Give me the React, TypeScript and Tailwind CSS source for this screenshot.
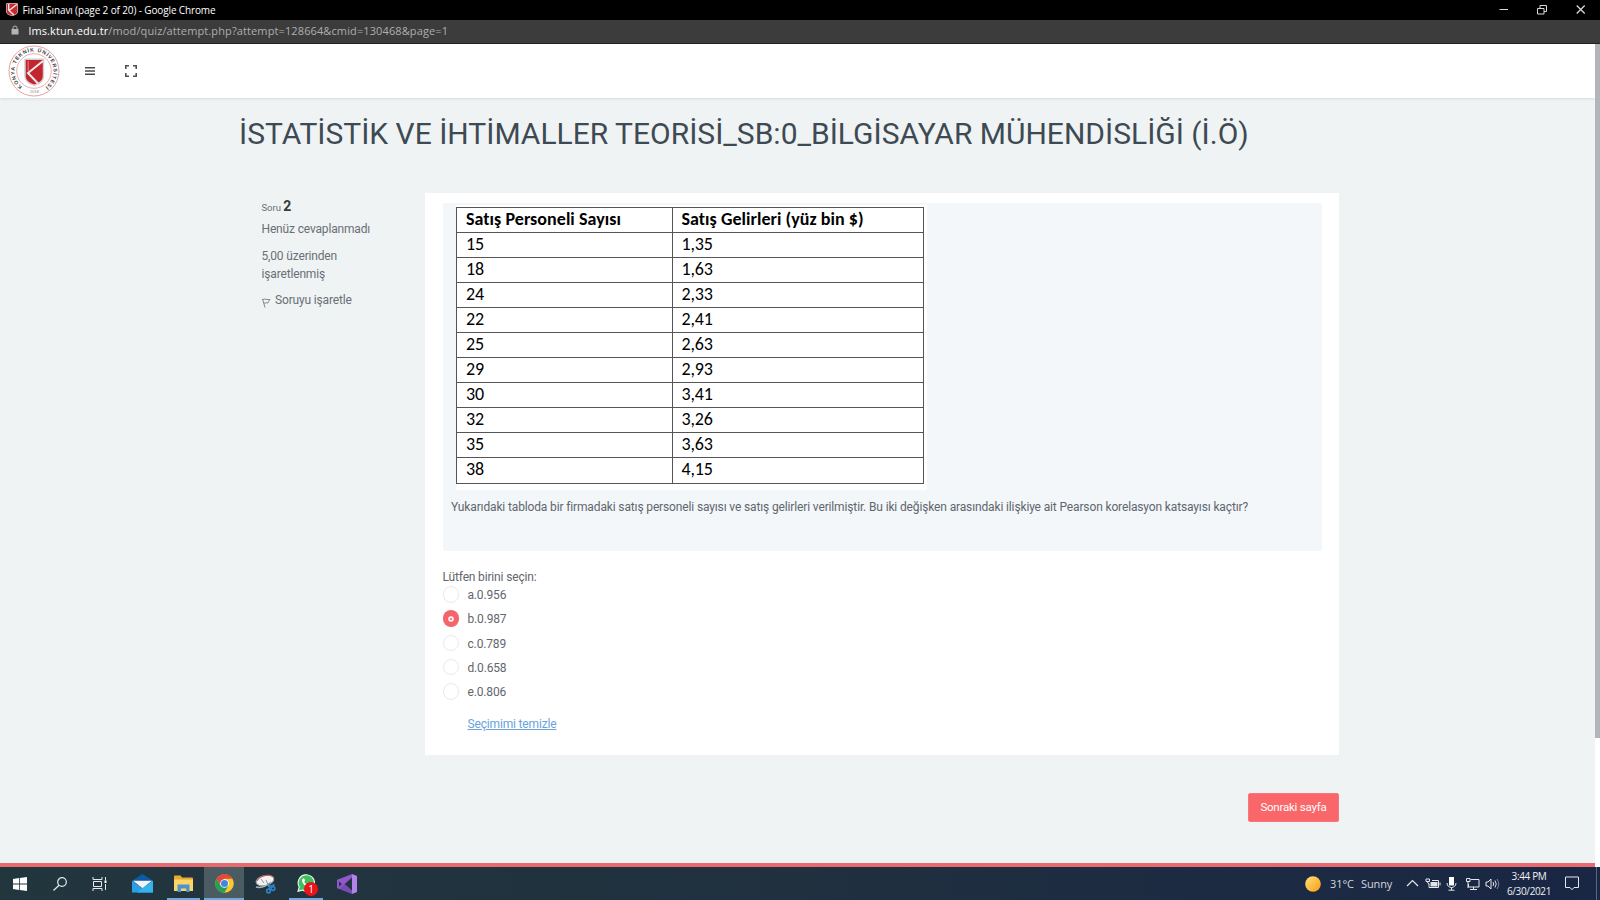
import React from "react";

const ROWS: [string, string][] = [
  ["15", "1,35"],
  ["18", "1,63"],
  ["24", "2,33"],
  ["22", "2,41"],
  ["25", "2,63"],
  ["29", "2,93"],
  ["30", "3,41"],
  ["32", "3,26"],
  ["35", "3,63"],
  ["38", "4,15"],
];

const OPTIONS = ["a.0.956", "b.0.987", "c.0.789", "d.0.658", "e.0.806"];

function Shield({ className }: { className: string }) {
  return (
    <svg className={className} viewBox="0 0 12 13">
      <path d="M0.500 0.500h11v8.500c0 2-2.500 3-5.500 3.700c-3-.7-5.500-1.700-5.500-3.700z" fill="#c92a2f" stroke="#d9b9bb" strokeWidth="0.800" />
      <path d="M2.700 1v6M10.800 1.500L3 7.500L8 12" fill="none" stroke="#f6eeee" strokeWidth="1.300" />
    </svg>
  );
}

function TitleBar() {
  return (
    <div className="flex h-[19.500px] shrink-0 items-center bg-black text-white">
      <Shield className="ml-[5.500px] h-[13px] w-[12px]" />
      <span className="ml-[5px] font-['Open_Sans','Noto_Sans',sans-serif] text-[10px] leading-none tracking-[-0.130px]">
        Final Sınavı (page 2 of 20) - Google Chrome
      </span>
      <svg className="ml-auto mr-[14px] h-[12px] w-[88px]" viewBox="0 0 88 12" fill="none" stroke="#d8d8d8">
        <path d="M1.500 5.500h8.500" />
        <path d="M39.500 4.500h6.500v5.500h-6.500zM42 4.500V1.500h6.500v6h-2.500" />
        <path d="M78.700 1.500l8 8M86.700 1.500l-8 8" strokeWidth="1.300" />
      </svg>
    </div>
  );
}

function AddressBar() {
  return (
    <div className="flex h-[24px] shrink-0 items-center border-b border-[#222] bg-[#3c3c3c] pb-[2px]">
      <svg className="ml-[11px] h-[10px] w-[8px]" viewBox="0 0 8 10">
        <path d="M2 4.500V3a2 2 0 0 1 4 0v1.500" fill="none" stroke="#b5b5b5" />
        <rect x="0.500" y="4" width="7" height="5.500" rx="0.600" fill="#b5b5b5" />
      </svg>
      <span className="ml-[9.500px] font-['Open_Sans','Noto_Sans',sans-serif] text-[11px] leading-none tracking-[0.115px] text-[#aeaeae]">
        <span className="text-white">lms.ktun.edu.tr</span>/mod/quiz/attempt.php?attempt=128664&amp;cmid=130468&amp;page=1
      </span>
    </div>
  );
}

function UniversityLogo() {
  return (
    <svg className="h-[52px] w-[52px]" viewBox="0 0 52 52">
      <circle cx="26" cy="26" r="25" fill="#fff" stroke="#e2999c" strokeWidth="0.900" />
      <circle cx="26" cy="26" r="17.300" fill="none" stroke="#e2999c" strokeWidth="0.800" />
      <defs>
        <path id="ring" d="M15 42.100A19.500 19.500 0 1 1 37 42.100" />
        <path id="year" d="M20 48h14" />
      </defs>
      <text fill="#3c3c42" fontSize="5.200" fontWeight="700" fontFamily="Liberation Sans, sans-serif">
        <textPath href="#ring" startOffset="1" textLength="97">
          KONYA TEKNİK ÜNİVERSİTESİ
        </textPath>
        <textPath href="#year" startOffset="2" fontSize="4" fontWeight="400" fill="#888">
          2018
        </textPath>
      </text>
      <path d="M17 14.200h18.500v17c0 4.500-4.500 7.500-9.250 9c-4.750-1.500-9.250-4.500-9.250-9z" fill="#c2252d" stroke="#d6cbd0" strokeWidth="1.500" />
      <path d="M35 16L20 28L30 38.500" fill="none" stroke="#f4e9ea" strokeWidth="2" />
      <path d="M20.200 16v10" fill="none" stroke="#e3a8ac" strokeWidth="0.800" />
    </svg>
  );
}

function SiteHeader() {
  return (
    <header className="flex h-[54.500px] shrink-0 items-center bg-white shadow-[0_1px_3px_rgba(0,0,0,0.100)]">
      <div className="ml-[8px]">
        <UniversityLogo />
      </div>
      <svg className="ml-[25px] h-[10px] w-[10px]" viewBox="0 0 10 10" stroke="#4a4a4a" strokeWidth="1.400">
        <path d="M0 1.700h10M0 5h10M0 8.300h10" />
      </svg>
      <svg className="ml-[30px] h-[12px] w-[12px]" viewBox="0 0 12 12" fill="none" stroke="#505050" strokeWidth="1.600">
        <path d="M0.800 4V0.800H4M8 0.800h3.200V4M11.200 8v3.200H8M4 11.200H0.800V8" />
      </svg>
    </header>
  );
}

function QuestionInfo() {
  return (
    <aside className="w-[163.500px] shrink-0 pt-[3.500px] text-[12px] leading-[18px] tracking-[-0.160px] text-[#6a6f75]">
      <div className="flex h-[18px] items-baseline text-[9.500px] tracking-[-0.050px]">
        Soru<b className="ml-[2.500px] text-[14px] font-bold text-[#373a3c]">2</b>
      </div>
      <div className="mt-[5.500px]">Henüz cevaplanmadı</div>
      <div className="mt-[8.500px] w-[100px]">5,00 üzerinden işaretlenmiş</div>
      <div className="mt-[8px] flex">
        <svg className="mt-[7px] h-[10px] w-[9px]" viewBox="0 0 9 10" fill="none" stroke="#777c80" strokeWidth="0.900">
          <path d="M0.500 1L3 9.500M0.700 1.500C3 0.500 5 2 8 1.500C6.500 3 6.500 4 6 5C4.500 4.500 3 5 2 5.300" />
        </svg>
        <span className="ml-[4.500px]">Soruyu işaretle</span>
      </div>
    </aside>
  );
}

function SalesTable() {
  return (
    <div className="h-[285px] w-[471px] bg-white pt-[2px] font-['Carlito','Lato',sans-serif] text-black">
      <div className="w-[467.500px] border-t border-l border-[#555]">
        <div className="flex h-[25.060px] border-b border-[#555] text-[18px] leading-[23px] font-bold">
          <div className="w-[216px] border-r border-[#555] pl-[9px] tracking-[0.050px]">Satış Personeli Sayısı</div>
          <div className="grow border-r border-[#555] pl-[8.500px] tracking-[0.050px]">Satış Gelirleri (yüz bin $)</div>
        </div>
        {ROWS.map(([people, income]) => (
          <div key={people} className="flex h-[25.060px] border-b border-[#555] text-[18px] leading-[22.500px]">
            <div className="w-[216px] border-r border-[#555] pl-[9px]">{people}</div>
            <div className="grow border-r border-[#555] pl-[8.500px]">{income}</div>
          </div>
        ))}
      </div>
    </div>
  );
}

function QuestionCard() {
  return (
    <section className="h-[562px] w-[914px] bg-white px-[17.500px] pt-[10px] text-[12px] tracking-[-0.160px] text-[#5f666d]">
      <div className="h-[347.500px] rounded-[2px] bg-[#f3f7fa] pt-[2px]">
        <div className="pl-[13.500px]">
          <SalesTable />
        </div>
        <p className="mt-[8px] pl-[8.500px] leading-[18px] tracking-[-0.139px] whitespace-nowrap">
          Yukarıdaki tabloda bir firmadaki satış personeli sayısı ve satış gelirleri verilmiştir. Bu iki değişken arasındaki
          ilişkiye ait Pearson korelasyon katsayısı kaçtır?
        </p>
      </div>
      <div className="mt-[17.500px] leading-[18px]">Lütfen birini seçin:</div>
      <div className="pt-[0.300px]">
        {OPTIONS.map((option, i) => (
          <div key={option} className="flex h-[24.200px] items-start leading-[18px]">
            {i === 1 ? (
              <span className="flex h-[16.500px] w-[16.500px] items-center justify-center rounded-full bg-[#f4646a]">
                <svg className="h-[6px] w-[6px]" viewBox="0 0 6 6">
                  <circle cx="3" cy="3" r="2" fill="#f4868a" stroke="#fff" strokeWidth="1.500" />
                </svg>
              </span>
            ) : (
              <span className="h-[16.500px] w-[16.500px] rounded-full border border-[#e8eaec] bg-white" />
            )}
            <span className="ml-[8.500px]">{option}</span>
          </div>
        ))}
      </div>
      <a className="mt-[8.200px] ml-[25px] inline-block leading-[18px] text-[#67a3dd] underline">Seçimimi temizle</a>
    </section>
  );
}

function Page() {
  return (
    <div className="flex min-h-0 grow font-['Roboto',sans-serif]">
      <div className="flex grow flex-col border-b-[4px] border-[#e96a6e] bg-[#eff3f4]">
        <SiteHeader />
        <h1 className="mt-[18px] ml-[239px] text-[30px] leading-[36px] whitespace-nowrap text-[#3e4a53]">
          İSTATİSTİK VE İHTİMALLER TEORİSİ_SB:0_BİLGİSAYAR MÜHENDİSLİĞİ (İ.Ö)
        </h1>
        <main className="mt-[41px] ml-[261.500px] flex">
          <QuestionInfo />
          <QuestionCard />
        </main>
        <div className="mt-[38px] flex w-[1339px] justify-end">
          <button className="h-[28.500px] w-[91px] rounded-[2px] border border-[#f8777b] bg-[#fa676b] text-[11.500px] leading-none tracking-[-0.220px] text-white">
            Sonraki sayfa
          </button>
        </div>
      </div>
      <div className="w-[5px] shrink-0 bg-white">
        <div className="h-[694.500px] bg-[#b3b5ba]" />
      </div>
    </div>
  );
}

function Taskbar() {
  return (
    <footer className="flex h-[33px] shrink-0 items-stretch bg-linear-to-r from-[#22363e] via-[#20303f] to-[#192644] font-['Open_Sans','Noto_Sans',sans-serif] text-white">
      <div className="flex w-[40px] items-center justify-center">
        <svg className="h-[14px] w-[14px]" viewBox="0 0 14 14" fill="#fff">
          <path d="M0 2l6-.9v5.500H0zM6.800 1L14 0v6.600H6.800zM0 7.400h6v5.500L0 12zM6.800 7.400H14V14l-7.200-1z" />
        </svg>
      </div>
      <div className="flex w-[40px] items-center justify-center">
        <svg className="h-[14px] w-[14px]" viewBox="0 0 14 14" fill="none" stroke="#e6eaec" strokeWidth="1.200">
          <circle cx="9" cy="5" r="4.300" />
          <path d="M6 8.200L0.500 13.500" />
        </svg>
      </div>
      <div className="flex w-[39px] items-center justify-center">
        <svg className="h-[14px] w-[15px]" viewBox="0 0 15 14" fill="none" stroke="#e6eaec">
          <path d="M1 0v2.500h9V0M1 14v-2.500h9V14M1.500 4.500h8v5h-8zM13.500 0v3.500M13.500 7v6" />
          <rect x="12.500" y="3.500" width="2" height="2.500" fill="#fff" stroke="none" />
        </svg>
      </div>
      <div className="flex w-[46px] items-center justify-center pb-[1px]">
        <svg className="h-[19px] w-[21px]" viewBox="0 0 21 20" preserveAspectRatio="none">
          <path d="M0 7L10.500 0L21 7v3H0z" fill="#0c59a4" />
          <path d="M0 7l10.500 8L21 7v12.500H0z" fill="#2b9ee6" />
          <path d="M21 7v12.500H5z" fill="#35b5ef" />
          <path d="M1 7h19l-9.500 8z" fill="#f2f4f6" />
        </svg>
      </div>
      <div className="flex w-[39px] justify-start pl-[2px]">
        <div className="flex w-[33px] items-center justify-center border-b-2 border-[#71a9dd] pt-[1px]">
          <svg className="h-[17px] w-[19px]" viewBox="0 0 19 17">
            <path d="M0 1.500Q0 0.500 1 0.500h5.500l1.500 2h10q1 0 1 1V16H0z" fill="#e8ab2e" />
            <path d="M0 4.500h19V16H0z" fill="#fbd568" />
            <path d="M3.500 17V9.500h12V17h-3.300v-3.500H7V17z" fill="#4a94cf" />
          </svg>
        </div>
      </div>
      <div className="flex w-[40px] items-center justify-center border-b-2 border-[#71a9dd] bg-[#4b5b62] pt-[2px]">
        <svg className="h-[19px] w-[19px]" viewBox="0 0 20 20">
          <circle cx="10" cy="10" r="9.800" fill="#f9c92e" />
          <path d="M1.500 5A9.800 9.800 0 0 1 18.500 5H10L6 12.300z" fill="#e04a3c" />
          <path d="M1.500 5A9.800 9.800 0 0 0 9.800 19.800L14 12.500L6 12.300z" fill="#26a059" />
          <circle cx="10" cy="10" r="4.600" fill="#fff" />
          <circle cx="10" cy="10" r="3.700" fill="#4285e8" />
        </svg>
      </div>
      <div className="flex w-[42px] items-center justify-center">
        <svg className="h-[20px] w-[21px]" viewBox="0 0 21 20">
          <ellipse cx="10" cy="6.500" rx="9" ry="5" transform="rotate(-14 10 6.500)" fill="#f2f2f2" stroke="#9ba2a8" />
          <path d="M2 7C5 1.500 14 -0.500 18.500 3" fill="none" stroke="#d3434a" />
          <path d="M1 13C5 14 11 12.500 16 8" fill="none" stroke="#aeb4b8" strokeWidth="1.500" />
          <path d="M6 5l3 4M11 6l3 7" stroke="#8d9499" />
          <g fill="none" stroke="#2b83c6" strokeWidth="1.700">
            <circle cx="13.500" cy="17" r="1.800" />
            <path d="M14.500 15.500V9.500M14.500 13l5-2.500" />
            <circle cx="18" cy="14.500" r="1.800" />
          </g>
        </svg>
      </div>
      <div className="flex w-[40px] justify-center">
        <div className="relative flex w-[34px] items-center justify-center border-b-2 border-[#71a9dd]">
          <svg className="h-[18px] w-[18px]" viewBox="0 0 18 18">
            <path d="M1 17.300L2.200 13A8.200 8.200 0 1 1 5.300 16.100z" fill="#3fc05c" stroke="#eefaf0" strokeWidth="1.100" />
            <path d="M6 4.500C4 6 5.500 9 7.500 11S12.500 14 13.500 12l.1-1.200-2.200-1.200-1 1.200C9 10.300 7.800 9 7.200 7.800l.9-1L7.200 4.600z" fill="#fff" />
          </svg>
          <span className="absolute top-[14.500px] left-[15px] flex h-[14px] w-[14px] items-center justify-center rounded-full bg-[#e8131b] text-[10px] leading-none">
            1
          </span>
        </div>
      </div>
      <div className="flex w-[42px] items-center justify-center">
        <svg className="h-[20px] w-[20px]" viewBox="0 0 20 20">
          <path d="M0 6L2 5L15 16.500V20L1 14.500z" fill="#7a4bb5" />
          <path d="M0 14L2 15L15 3.500V0L1 5.500L0 6z" fill="#9157cc" />
          <path d="M2 7.500v5L5 10z" fill="#22343e" />
          <path d="M15 0l5 2v16l-5 2z" fill="#b483ea" />
          <path d="M15 6v8l-5-4z" fill="#22343e" />
        </svg>
      </div>

      <div className="ml-auto flex items-center">
        <svg className="h-[16px] w-[16px]" viewBox="0 0 16 16">
          <defs>
            <linearGradient id="sun" x1="0" y1="0" x2="1" y2="1">
              <stop offset="0" stopColor="#ffe27a" />
              <stop offset="1" stopColor="#fb9b12" />
            </linearGradient>
          </defs>
          <circle cx="8" cy="8" r="7.800" fill="url(#sun)" />
        </svg>
        <span className="ml-[9px] w-[31px] pt-px text-[11px] tracking-[-0.100px] text-[#d3d7de]">31°C</span>
        <span className="w-[44.500px] pt-px text-[11px] tracking-[-0.100px] text-[#d3d7de]">Sunny</span>
        <svg className="h-[16px] w-[94px]" viewBox="0 0 94 16" fill="none" stroke="#e4e7ec">
          <path d="M1 10L6.500 4.500L12 10" strokeWidth="1.200" />
          <path d="M26 4.500h6.500v7h-9.500V8M34 6.500v3" />
          <rect x="24.500" y="6" width="7" height="4.500" fill="#dfe3e9" stroke="none" />
          <path d="M20 3h3.500v2.500H20zM21.500 5.500q0 2.500 2 2.500" />
          <path d="M43 1h5v8.500h-5z" fill="#fff" stroke="none" />
          <path d="M41 7c0 6 9 6 9 0M45.500 11.500V14M42.500 14.200h6" />
          <path d="M64.500 3.500h8.500v7.500H62.500V8M67.500 11v2.500M64 13.500h7M60.500 2.500h3.500v3h-3.500zM62 5.500V12" />
          <path d="M80 6h2l3-3v10l-3-3h-2zM87 6q1.500 2 0 4M89 4.500q2.500 3.500 0 7" />
          <path d="M91 3q3.500 5 0 10" stroke="#7c869b" />
        </svg>
        <div className="ml-[5px] w-[49px] text-center text-[10px] leading-[15px] tracking-[-0.350px] whitespace-nowrap text-[#eef0f3]">
          <div>3:44 PM</div>
          <div>6/30/2021</div>
        </div>
        <svg className="ml-[11.500px] h-[15px] w-[14px]" viewBox="0 0 14 15" fill="none" stroke="#e4e7ec">
          <path d="M0.500 1h13v10.500H9L7 13.700L5 11.500H0.500z" />
        </svg>
        <div className="ml-[16.500px] mr-[3.500px] h-[33px] w-px bg-[#5b667d]" />
      </div>
    </footer>
  );
}

export default function App() {
  return (
    <div className="flex h-[900px] w-[1600px] flex-col overflow-hidden">
      <TitleBar />
      <AddressBar />
      <Page />
      <Taskbar />
    </div>
  );
}
